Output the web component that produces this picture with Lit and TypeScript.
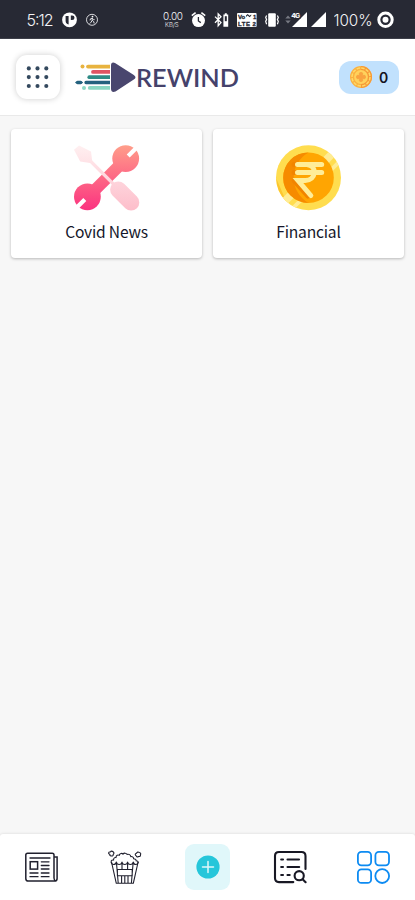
import { LitElement, html, svg, css } from "lit";
import { customElement, property } from "lit/decorators.js";

@customElement("status-bar")
class StatusBar extends LitElement {
  static styles = css`
    :host { display: flex; align-items: center; height: 39px; padding: 0 21px 0 27px; background: #272934; color: #f4f4f6; box-sizing: border-box; font-family: Inter, "Liberation Sans", sans-serif; border-bottom: 1px solid #3d3f49; flex: none; }
    svg { display: block; flex: none; }
    .left, .right { display: flex; align-items: center; padding-top: 1px; }
    .left { gap: 9px; }
    .right { margin-left: auto; }
    .speed { margin-right: 8px; }
    .alarm { margin-right: 8px; }
    .bt { margin-right: 8px; }
    .lte { margin-right: 8px; }
    .vib { margin-right: 6px; }
    .sig { margin-right: 4px; }
    .sig2 { margin-right: 8px; }
    .pct { margin-right: 4px; }
    text { fill: #f4f4f6; }
    .light { font-weight: 300; }
    .bold { font-weight: 800; }
    .ink { fill: #272934; }
    .tiny { font: 700 6px "Liberation Sans", sans-serif; stroke: #272934; stroke-width: .3; }
  `;
  render() {
    return html`
      <div class="left">
        <svg width="26" height="20" viewBox="27 10 26 20"><text class="light" x="26.5" y="26" font-size="16" textLength="27">5:12</text></svg>
        <svg width="15" height="20" viewBox="62 10 15 20"><circle cx="69.5" cy="19.8" r="7.4" fill="#fff"/><path d="M65.6 16h3v8.4q-3-.4-3-3.4z" fill="#272934"/><path d="M70.8 15.4h1.4a2.3 2.3 0 0 1 0 4.6h-1.4z" fill="#272934"/></svg>
        <svg width="12" height="20" viewBox="86 10 12 20" fill="none" stroke="#e9e9ec"><circle cx="92" cy="19.8" r="5.5" stroke-width=".9"/><circle cx="92.5" cy="16.6" r=".9" fill="#fff" stroke="none"/><path d="M92.2 18v2.3l1.5 1.2.5 2M92.1 20.3l-.9 1.8-1.5 1.5M90 20.3l.5-1.5 1.7-.6 1.2 1.2 1.2.3" stroke-width="1"/></svg>
      </div>
      <div class="right">
        <svg class="speed" width="20" height="20" viewBox="163.5 10 20 20"><text class="light" font-size="10"><tspan x="163.6" y="20.2" letter-spacing="-.35">0.00</tspan><tspan x="165.5" y="26.8" font-size="6">KB/S</tspan></text></svg>
        <svg class="alarm" width="15" height="20" viewBox="191 10 15 20"><circle cx="198.5" cy="20.6" r="6.5" fill="#fff"/><path d="M191.8 15.6l3.8-3M205.2 15.6l-3.8-3" stroke="#fff" stroke-width="1.6" fill="none"/><path d="M198.4 17v4l2.4 1.6" stroke="#272934" stroke-width="1.3" fill="none"/></svg>
        <svg class="bt" width="15" height="20" viewBox="214 10 15 20"><path d="M215 16.6l6 6-2.8 3.2V13.8l2.8 3-6 6" fill="none" stroke="#fff" stroke-width="1.3"/><path d="M223.4 14.4h1.4v-1.2h2v1.2h1.4v12.3h-4.8z" fill="#fff"/><path d="M224.8 16.2h2v5h-2z" class="ink"/></svg>
        <svg class="lte" width="20" height="20" viewBox="237 10 20 20"><rect x="237" y="13" width="19.6" height="13.9" rx="1" fill="#fff"/><g class="ink"><text class="ink tiny" x="238" y="18.9">Vo</text><text class="ink tiny" x="253" y="18.9">1</text><text class="ink tiny" x="238" y="26" textLength="12">LTE</text><text class="ink tiny" x="252.6" y="26">2</text><path d="M246 15.6l1.6-1.6 2 1.8 1.6-1.4v1.4l-1.6 1.4-2-1.8-1.6 1.6z"/></g></svg>
        <svg class="vib" width="14" height="20" viewBox="265 10 14 20"><rect x="268.2" y="13.3" width="7.6" height="13.4" rx="1" fill="#fff"/><path d="M266.6 15.4l-.9 2 .9 2-.9 2 .9 2.8M277.4 15.4l.9 2-.9 2 .9 2-.9 2.8" stroke="#fff" stroke-width="1.2" fill="none"/></svg>
        <svg class="sig" width="22" height="20" viewBox="285 10 22 20"><path d="M285.3 18.6l2.7-3 2.7 3zM285.3 20.6l2.7 3 2.7-3z" fill="#777982"/><path d="M307 12v15h-15z" fill="#fff"/><path d="M291 11h9.5v7.8H291z" class="ink"/><text class="bold" x="291.2" y="17.9" font-size="6.8" textLength="9">4G</text></svg>
        <svg class="sig2" width="15" height="20" viewBox="311.5 10 15 20"><path d="M326.5 12v15h-15z" fill="#fff"/></svg>
        <svg class="pct" width="39" height="20" viewBox="334 10 39 20"><text class="light" x="333.4" y="26" font-size="16" textLength="39.2" lengthAdjust="spacingAndGlyphs">100%</text></svg>
        <svg width="17" height="20" viewBox="377 10 17 20"><circle cx="385.5" cy="19.8" r="6.7" fill="none" stroke="#fff" stroke-width="3"/><circle cx="385.5" cy="19.8" r="3" fill="#fff"/></svg>
      </div>`;
  }
}

@customElement("app-header")
class AppHeader extends LitElement {
  static styles = css`
    :host { display: flex; align-items: center; height: 77px; padding: 0 16px; box-sizing: border-box; background: #fff; border-bottom: 1px solid #e9e9e9; flex: none; }
    svg { display: block; }
    .menu { width: 44px; height: 44px; border-radius: 11px; background: #fff; box-shadow: 0 0 6px rgba(0, 0, 0, .2); }
    .logo { margin-left: 15px; }
    .word { font: 600 24.6px Lato, sans-serif; fill: #45426b; }
    .coins { margin-left: auto; display: flex; align-items: center; width: 60px; height: 33px; border-radius: 12px; background: #c1e1fd; padding-left: 11px; box-sizing: border-box; font: 600 14px Inter, sans-serif; color: #14141f; gap: 7px; }
  `;
  render() {
    const dots = [28.8, 37.5, 46.3].flatMap((x) => [68.4, 77.1, 86].map((y) => svg`<circle cx=${x} cy=${y} r="2.05" fill="#34495e"/>`));
    return html`
      <div class="menu"><svg width="44" height="44" viewBox="16 55 44 44">${dots}</svg></div>
      <svg class="logo" width="165" height="34" viewBox="75 60 165 34">
        <g fill="none" stroke-width="3.8">
          <path d="M88 66.6h22" stroke="#e8b33f" stroke-linecap="round"/><circle cx="82.5" cy="66.6" r="2" fill="#e8b33f"/>
          <path d="M93 71.9h17" stroke="#df5563" stroke-linecap="round"/>
          <path d="M89.3 77.2h21" stroke="#2f8b86" stroke-linecap="round"/>
          <path d="M86 82.5h24M77.5 82.5h3.2" stroke="#24627f" stroke-linecap="round" stroke-width="3.3"/><path d="M75.3 82.5h7.5" stroke="#24627f" stroke-width="1.2"/>
          <path d="M89.8 87.9h20" stroke="#8bd8c4" stroke-linecap="round"/><circle cx="84" cy="88" r="2" fill="#8bd8c4"/>
        </g>
        <path d="M110 62h26v32h-26z" fill="#fff"/>
        <path d="M111 65.5q0-4 4-2.6L133.8 75q3.4 2.4 0 4.6L115.5 91.5q-4.2 1.5-4.5-2.6z" fill="#49466e"/>
        <text class="word" x="136" y="86.8" textLength="103" lengthAdjust="spacingAndGlyphs">REWIND</text>
      </svg>
      <div class="coins">
        <svg width="22" height="22" viewBox="0 0 22 22"><circle cx="11" cy="11" r="11" fill="#fbb040"/><path d="M11 0a11 11 0 0 1 0 22z" fill="#f79a38"/><circle cx="11" cy="11" r="9" fill="none" stroke="#ffda66" stroke-width="1.5" stroke-dasharray="3.5 1.2"/><circle cx="11" cy="11" r="6.9" fill="#ffd25c"/><path d="M11 11C8.8 9 8.8 6 11 6.7 13.2 6 13.2 9 11 11c2-2.2 5-2.2 4.3 0 .7 2.2-2.3 2.2-4.3 0 2.2 2 2.2 5 0 4.3C8.8 16 8.8 13 11 11c-2 2.2-5 2.2-4.3 0C6 8.8 9 8.8 11 11z" fill="#f9a340" stroke="#f9a340" stroke-width="1"/></svg>
        <span>0</span>
      </div>`;
  }
}

@customElement("category-card")
class CategoryCard extends LitElement {
  @property() label = "";
  static styles = css`
    :host { display: flex; flex-direction: column; align-items: center; height: 129px; background: #fff; border-radius: 4px; box-shadow: 0 1px 3px rgba(0, 0, 0, .26); padding-top: 16px; box-sizing: border-box; }
    .label { margin-top: 8px; font: 400 15.6px/24px "Noto Sans CJK JP", "Noto Sans", sans-serif; letter-spacing: -.2px; color: #14162a; white-space: nowrap; }
  `;
  render() {
    return html`<slot></slot><div class="label">${this.label}</div>`;
  }
}

@customElement("bottom-nav")
class BottomNav extends LitElement {
  static styles = css`
    :host { display: flex; align-items: center; height: 66px; background: #fff; box-shadow: 0 0 3px rgba(0, 0, 0, .14); padding: 0 25px; box-sizing: border-box; flex: none; border-radius: 3px 3px 0 0; }
    svg { display: block; fill: none; flex: none; }
    .news { margin-right: 49px; }
    .add { display: grid; place-items: center; width: 45px; height: 46px; margin: 0 43px; border-radius: 9px; background: #e0f7fa; flex: none; }
    .search { margin-right: 49px; }
  `;
  render() {
    return html`
      <svg class="news" width="34" height="34" viewBox="25 850 34 34" stroke="#20202e" stroke-width="1.5" stroke-linecap="round">
        <path d="M54 878V855q0-1.8-1.8-1.8H27.6q-1.8 0-1.8 1.8v23.5q0 2.6 2.6 2.6h26.2q2.5 0 2.5-2.6V857H54.2M54 878q.2 2.6 1.6 2.9"/>
        <path d="M30 858h20M41.3 861.8H49M41.3 865.5H49M41.3 869H49M30 873H38M41.3 873H49M30 876.7H38M41.3 876.7H49" stroke-width="1.3"/><rect x="30.2" y="861.7" width="7.4" height="7.4"/>
      </svg>
      <svg width="34" height="34" viewBox="108 850 34 34" stroke="#20202e" stroke-width="1.1" stroke-linejoin="round">
        <path d="M111.5 862l4.8 21.3h17l4.8-21.3M111.2 862.3c-.4-2.2 1.5-2.5 2.4-2.2-.4-2.2 1.6-2.8 2.4-2.5 0-2.3 2-3 3.2-2.2.5-2.4 3-2.4 3.8-1.2 1-1.6 3.4-1.2 4 .2 2-.6 3.6.4 3.8 2.2 1.8-.2 3 .8 2.8 2.2 1.7 0 2.8.9 2.5 2 1.4.2 2.4.8 2 2"/>
        <path d="M111.2 862c.4 3.3 4.4 3.3 5.2 0 .5 3.3 5 3.3 5.6 0 .5 3.3 5 3.3 5.6 0 .5 3.3 5 3.3 5.6 0 .8 3.3 4.6 3.3 5 0M116.4 862l1.8 21M122 862v7.2M127.6 862v7.2M133.2 862l-1.8 21M117.4 869.5h14.8v6.2h-14.8zM121.6 876v7M124.8 876v7M128 876v7"/>
        <path d="M108.7 853.6q-.2-2 1.6-1.6 1.3-1.7 2.8-.2 1.6 1.2.1 2.7 0 2.1-2 1.4-1.6.2-1.3-1.4zM135.5 855.3q-.8-1.5 1-2 1-2 2.8-.8 2 .4 1.2 2.2.1 2.2-2 1.8-1.4 1.2-2-.3z"/>
      </svg>
      <div class="add"><svg width="24" height="24" viewBox="0 0 24 24"><circle cx="12" cy="12" r="11.6" fill="#26c6da"/><path d="M12 6.5v11M6.5 12h11" stroke="#e0f7fa" stroke-width="1.5" stroke-linecap="round"/></svg></div>
      <svg class="search" width="34" height="34" viewBox="273 850 34 34" stroke="#181824" stroke-width="2.1" stroke-linecap="round">
        <path d="M293.3 882.1H279q-4 0-4-4V856q0-4 4-4h22.5q4 0 4 4v13M287.5 859.5H299M287.5 867H299.2M281.2 859.5h1.8M281.2 867h1.8M281.2 875h1.8M287.5 875h2.2"/><circle cx="299.2" cy="875.7" r="4.6"/><path d="M302.6 879.2l3 3"/>
      </svg>
      <svg width="34" height="34" viewBox="356 850 34 34" stroke="#0d8bf2" stroke-width="1.8">
        <rect x="357.9" y="851.9" width="13.2" height="13.4" rx="3.5"/><rect x="375.4" y="851.9" width="13.6" height="13.4" rx="3.5"/><rect x="357.9" y="869.3" width="13.2" height="13.6" rx="3.5"/><circle cx="382.2" cy="876.1" r="6.9"/>
      </svg>`;
  }
}

@customElement("app-root")
class AppRoot extends LitElement {
  static styles = css`
    :host { display: flex; flex-direction: column; height: 900px; background: #f7f7f7; overflow: hidden; }
    .grid { flex: 1; display: grid; grid-template-columns: 191px 191px; gap: 11px; align-content: start; padding: 13px 11px; }
    svg { display: block; }
  `;
  render() {
    return html`
      <status-bar></status-bar>
      <app-header></app-header>
      <main class="grid">
        <category-card label="Covid News">
          <svg width="66" height="66" viewBox="74 145 66 66">
            <defs>
              <linearGradient id="wrench" gradientUnits="userSpaceOnUse" x1="0" y1="145" x2="0" y2="211"><stop offset="0" stop-color="#ff9e8a"/><stop offset="1" stop-color="#fb3180"/></linearGradient>
              <linearGradient id="driver" gradientUnits="userSpaceOnUse" x1="0" y1="145" x2="0" y2="211"><stop offset="0" stop-color="#fff0f1"/><stop offset="1" stop-color="#fdbdca"/></linearGradient>
            </defs>
            <g fill="url(#wrench)"><circle cx="125.7" cy="158.6" r="13.4"/><circle cx="87.4" cy="196.8" r="13.4"/><path d="M114 162.5l8.4 8.4-22.4 22.4-8.4-8.4z"/></g>
            <path d="M138 146.2l-9.8 9.8M75 209.2l9.8-9.8" stroke="#fff" stroke-width="4.2"/>
            <path fill="url(#driver)" d="M79 145.5L91 151.6l1.2 9.6-2.2 1.7-9.8-1.4L74 149.8z"/>
            <path d="M89 159.6L114 184.6" stroke="url(#driver)" stroke-width="3.4"/>
            <path d="M118.3 189.6L131.1 202.4" stroke="url(#driver)" stroke-width="16.4" stroke-linecap="round"/>
          </svg>
        </category-card>
        <category-card label="Financial">
          <svg width="66" height="66" viewBox="276 145 66 66">
            <defs><clipPath id="coin"><circle cx="308.5" cy="177.7" r="32.5"/></clipPath></defs>
            <circle cx="308.5" cy="177.7" r="32.5" fill="#ffdd4f"/>
            <path clip-path="url(#coin)" d="M276 177.7A32.5 32.5 0 0 1 308.5 145.2 32.5 32.5 0 0 0 286 201z" fill="#fdc62f"/>
            <g clip-path="url(#coin)" stroke="#ffec94"><path d="M275 211L341 145" stroke-width="7.8"/><path d="M284 217L346 155" stroke-width="3.8"/></g>
            <circle cx="308.5" cy="177.7" r="25.3" fill="#ffa502"/>
            <path d="M308.5 152.4A25.3 25.3 0 0 0 308.5 203 29 29 0 0 1 308.5 152.4z" fill="#f68b00"/>
            <g fill="none" stroke-linecap="round" stroke-width="5"><path d="M294 164.5h10M294 172.5h10M294 180.5L308 196" stroke="#f18400"/><path d="M297.5 164.5h24.2M297.5 172.5h24.2M307 164.5c11 1.5 9 16-1.8 16H298L310.8 195.5" stroke="#ffed99"/></g>
          </svg>
        </category-card>
      </main>
      <bottom-nav></bottom-nav>`;
  }
}
